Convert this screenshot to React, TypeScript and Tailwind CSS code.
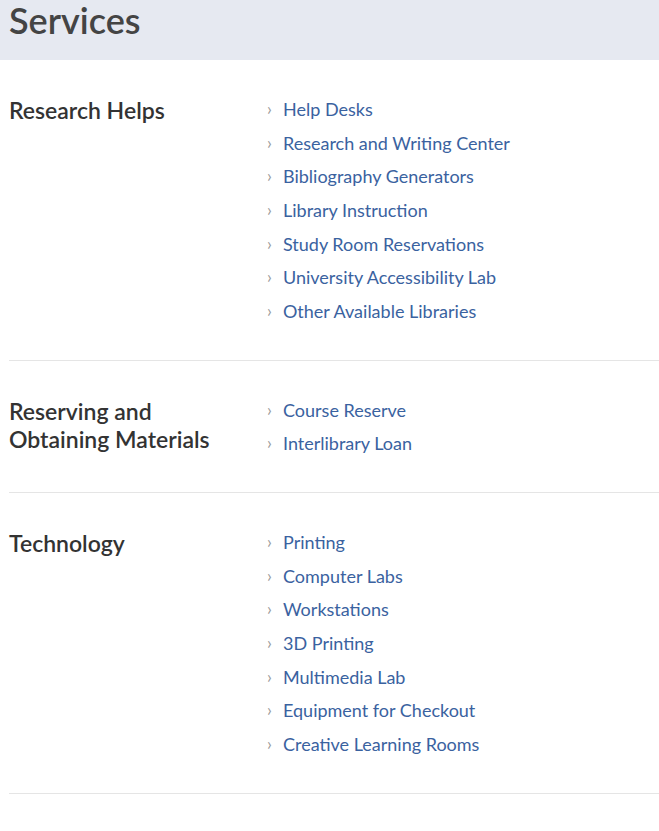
const sections = [
  {
    title: ["Research Helps"],
    links: [
      "Help Desks",
      "Research and Writing Center",
      "Bibliography Generators",
      "Library Instruction",
      "Study Room Reservations",
      "University Accessibility Lab",
      "Other Available Libraries",
    ],
  },
  {
    title: ["Reserving and", "Obtaining Materials"],
    links: ["Course Reserve", "Interlibrary Loan"],
  },
  {
    title: ["Technology"],
    links: [
      "Printing",
      "Computer Labs",
      "Workstations",
      "3D Printing",
      "Multimedia Lab",
      "Equipment for Checkout",
      "Creative Learning Rooms",
    ],
  },
];

export default function App() {
  return (
    <div className="min-h-screen bg-white font-['Lato','Liberation_Sans',sans-serif]">
      <header className="h-[60px] bg-[#e6e9f1] px-[9px]">
        <h1 className="text-[36px] font-semibold leading-[40px] text-[#444]">Services</h1>
      </header>

      <div className="pl-[9px]">
        {sections.map((s) => (
          <section key={s.title[0]} className="flex border-b border-[#e5e5e5] py-8">
            <h2 className="w-[258px] shrink-0 pt-[4px] text-[23px] font-semibold leading-[28px] text-[#333]">
              {s.title.map((t) => (
                <span key={t} className="block">
                  {t}
                </span>
              ))}
            </h2>
            <ul>
              {s.links.map((l) => (
                <li key={l} className="flex items-center pt-[1px] leading-[32.67px]">
                  <span className="w-[16px] text-[17px] text-[#9a9a9a]">›</span>
                  <a href="#" className="text-[18px] text-[#3a62a0]">
                    {l}
                  </a>
                </li>
              ))}
            </ul>
          </section>
        ))}
      </div>
    </div>
  );
}
